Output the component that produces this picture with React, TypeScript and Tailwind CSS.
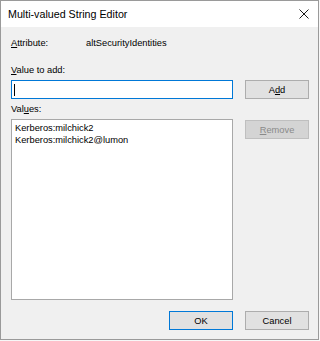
// Windows "Multi-valued String Editor" dialog, drawn at the scale of the capture.

const FONT = { fontFamily: '"Liberation Sans", Arial, sans-serif' };

function Btn({
  children,
  primary,
  disabled,
}: {
  children: React.ReactNode;
  primary?: boolean;
  disabled?: boolean;
}) {
  const look = disabled
    ? "border-[#bfbfbf] bg-[#d4d4d4] text-[#8a8a8a]"
    : primary
      ? "border-[#0078d7] bg-[#e1e1e1] text-black"
      : "border-[#adadad] bg-[#e1e1e1] text-black";
  return (
    <div className={`flex h-[19px] w-[64px] items-center justify-center border text-[9.3px] leading-[12px] ${look}`}>
      {children}
    </div>
  );
}

export default function App() {
  return (
    <div className="h-[341px] w-[320px] bg-[#f7f7f7]" style={FONT}>
      <div className="flex h-[340px] w-[319px] flex-col border border-[#9a9a9a] bg-[#f0f0f0]">
        {/* title bar */}
        <div className="flex h-[26px] items-center justify-between bg-white pl-[7px] pr-[8px]">
          <span className="text-[10.7px] text-black">Multi-valued String Editor</span>
          <svg width="10" height="10" viewBox="0 0 10 10" className="mr-[1px]">
            <path d="M0.5 0.5 L9.5 9.5 M9.5 0.5 L0.5 9.5" stroke="#1a1a1a" strokeWidth="1" />
          </svg>
        </div>

        <div className="flex flex-1 flex-col pl-[10px] pr-[9px] pt-[10px] text-[9.3px] leading-[12px] text-black">
          <div className="flex">
            <span className="w-[75px]">
              <span className="underline">A</span>ttribute:
            </span>
            <span>altSecurityIdentities</span>
          </div>

          <div className="mt-[15px]">
            <span className="underline">V</span>alue to add:
          </div>
          <div className="mt-[4px] flex gap-[12px]">
            <div className="flex h-[19px] w-[222px] items-center border border-[#0078d7] bg-white pl-[2px]">
              <div className="h-[12px] w-px bg-black" />
            </div>
            <Btn>
              A<span className="underline">d</span>d
            </Btn>
          </div>

          <div className="mt-[4px]">
            Val<span className="underline">u</span>es:
          </div>
          <div className="mt-[4px] flex gap-[12px]">
            <div className="flex h-[181px] w-[222px] flex-col border border-[#a8a8a8] bg-white px-[3px] pt-[2px]">
              <div>Kerberos:milchick2</div>
              <div>Kerberos:milchick2@lumon</div>
            </div>
            <div className="pt-[1px]">
              <Btn disabled>
                <span className="underline">R</span>emove
              </Btn>
            </div>
          </div>

          <div className="mt-[11px] flex justify-end gap-[12px]">
            <Btn primary>OK</Btn>
            <Btn>Cancel</Btn>
          </div>
        </div>
      </div>
    </div>
  );
}
